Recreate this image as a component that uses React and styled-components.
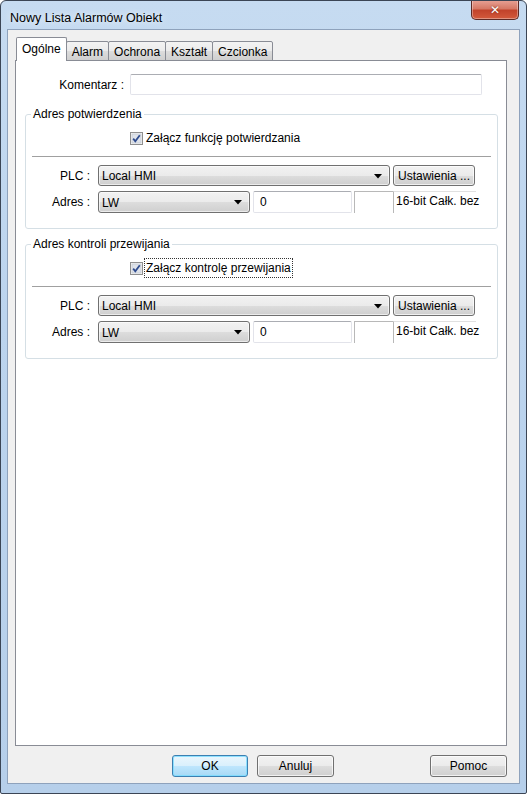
import React from "react";
import styled, { createGlobalStyle } from "styled-components";

const GlobalStyle = createGlobalStyle`
  html, body {
    margin: 0;
    padding: 0;
    background: #ffffff;
  }
  body {
    font-family: "Liberation Sans", Arial, sans-serif;
    font-size: 12px;
    color: #000;
  }
  * {
    box-sizing: border-box;
  }
`;

const tabs = ["Ogólne", "Alarm", "Ochrona", "Kształt", "Czcionka"];

const groups = [
  { title: "Adres potwierdzenia", check: "Załącz funkcję potwierdzania", focused: false },
  { title: "Adres kontroli przewijania", check: "Załącz kontrolę przewijania", focused: true },
];

const CheckIcon = () => (
  <svg width="13" height="13" viewBox="0 0 13 13">
    <rect x="0.5" y="0.5" width="12" height="12" fill="#f4f4f4" stroke="#8f8f8f" />
    <rect x="2" y="2" width="9" height="9" fill="#dfe3ea" stroke="#bcc3cc" strokeWidth="0.6" />
    <path d="M3.2 6.6 L5.3 9.2 L9.8 3.2" fill="none" stroke="#2f4c8f" strokeWidth="1.8" />
  </svg>
);

const Arrow = () => (
  <svg width="8" height="5" viewBox="0 0 8 5">
    <path d="M0 0 H8 L4 4.5 Z" fill="#000" />
  </svg>
);

const App = () => {
  return (
    <>
      <GlobalStyle />
      <Window>
        <TitleBar>
          <Title>Nowy Lista Alarmów Obiekt</Title>
          <CloseButton>✕</CloseButton>
        </TitleBar>
        <Client>
          <TabStrip>
            {tabs.map((t, i) => (
              <Tab key={t} active={i === 0}>
                {t}
              </Tab>
            ))}
          </TabStrip>
          <Panel>
            <CommentRow>
              <CommentLabel>Komentarz :</CommentLabel>
              <CommentInput />
            </CommentRow>
            {groups.map((g) => (
              <Group key={g.title}>
                <Legend>{g.title}</Legend>
                <CheckRow>
                  <CheckIcon />
                  <CheckText focused={g.focused}>{g.check}</CheckText>
                </CheckRow>
                <Separator />
                <FieldRow>
                  <FieldLabel>PLC :</FieldLabel>
                  <Combo width={292}>
                    <span>Local HMI</span>
                    <Arrow />
                  </Combo>
                  <Button width={82}>Ustawienia ...</Button>
                </FieldRow>
                <FieldRow second>
                  <FieldLabel>Adres :</FieldLabel>
                  <Combo width={152}>
                    <span>LW</span>
                    <Arrow />
                  </Combo>
                  <TextBox width={99}>0</TextBox>
                  <HalfBox />
                  <Static>16-bit Całk. bez</Static>
                </FieldRow>
              </Group>
            ))}
          </Panel>
          <Footer>
            <Button width={76} tall primary>OK</Button>
            <Button width={77} tall>Anuluj</Button>
            <Spacer />
            <Button width={77} tall>Pomoc</Button>
          </Footer>
        </Client>
      </Window>
    </>
  );
};

const Window = styled.div`
  width: 527px;
  height: 794px;
  display: flex;
  flex-direction: column;
  border: 1px solid #3b4555;
  border-radius: 6px 6px 2px 2px;
  background: linear-gradient(180deg, #c6dbf1 0%, #bcd4ee 40%, #b6cfea 100%);
  padding: 0 6px 9px 6px;
  overflow: hidden;
`;

const TitleBar = styled.div`
  height: 28px;
  display: flex;
  align-items: flex-start;
  justify-content: space-between;
`;

const Title = styled.div`
  font-size: 12.5px;
  margin-top: 10px;
  margin-left: 3px;
  color: #000;
  text-shadow: 0 0 6px rgba(255, 255, 255, 0.9);
`;

const CloseButton = styled.div`
  width: 48px;
  height: 20px;
  margin-top: -1px;
  margin-right: 1px;
  border: 1px solid #5d2a25;
  border-top: none;
  border-radius: 0 0 5px 5px;
  background: linear-gradient(180deg, #e8a397 0%, #d67966 45%, #c2432b 55%, #d35a3c 100%);
  box-shadow: inset 0 0 0 1px rgba(255, 255, 255, 0.35);
  color: #fff;
  font-family: "DejaVu Sans", sans-serif;
  font-weight: bold;
  font-size: 12px;
  display: flex;
  align-items: center;
  justify-content: center;
  text-shadow: 0 0 2px #6b1d12;
`;

const Client = styled.div`
  flex: 1;
  display: flex;
  flex-direction: column;
  background: #f0f0f0;
  border: 1px solid #8ea2bc;
  padding: 7px 12px 0 7px;
`;

const TabStrip = styled.div`
  display: flex;
  align-items: flex-end;
  height: 24px;
  padding-left: 1px;
  margin-bottom: -1px;
  position: relative;
  z-index: 1;
`;

const Tab = styled.div`
  height: ${(p) => (p.active ? "24px" : "20px")};
  padding: ${(p) => (p.active ? "4px 5px 0" : "3px 5px 0")};
  margin-left: ${(p) => (p.active ? "0" : "-1px")};
  border: 1px solid #898c95;
  border-bottom: ${(p) => (p.active ? "none" : "1px solid #898c95")};
  border-radius: 2px 2px 0 0;
  background: ${(p) =>
    p.active
      ? "#ffffff"
      : "linear-gradient(180deg, #f3f3f3 0%, #ebebeb 50%, #dddddd 51%, #cfcfcf 100%)"};
  white-space: nowrap;
  &:first-child {
    margin-left: 0;
  }
`;

const Panel = styled.div`
  flex: 1;
  background: #ffffff;
  border: 1px solid #898c95;
  padding: 13px 8px 0 9px;
`;

const CommentRow = styled.div`
  display: flex;
  align-items: center;
  height: 21px;
`;

const CommentLabel = styled.div`
  width: 99px;
  text-align: right;
  margin-right: 6px;
`;

const CommentInput = styled.div`
  width: 352px;
  height: 21px;
  border: 1px solid #e2e3ea;
  border-top-color: #abadb3;
  border-radius: 2px;
  background: #fff;
`;

const Group = styled.fieldset`
  width: 473px;
  margin: 12px 0 0 0;
  padding: 0 0 15px 0;
  border: 1px solid #d5dfe5;
  border-radius: 3px;
  & + & {
    margin-top: 8px;
  }
`;

const Legend = styled.legend`
  margin-left: 5px;
  padding: 0 2px;
  line-height: 14px;
`;

const CheckRow = styled.div`
  display: flex;
  align-items: center;
  height: 20px;
  margin-top: 7px;
  padding-left: 104px;
  gap: 2px;
`;

const CheckText = styled.span`
  padding: 2px 1px;
  outline: ${(p) => (p.focused ? "1px dotted #333" : "none")};
`;

const Separator = styled.div`
  margin: 8px 6px 0 6px;
  border-top: 1px solid #a0a0a0;
`;

const FieldRow = styled.div`
  display: flex;
  align-items: stretch;
  margin-top: ${(p) => (p.second ? "5px" : "8px")};
  height: ${(p) => (p.second ? "22px" : "21px")};
`;

const FieldLabel = styled.div`
  width: 64px;
  margin-right: 8px;
  text-align: right;
  display: flex;
  align-items: center;
  justify-content: flex-end;
`;

const Combo = styled.div`
  width: ${(p) => p.width}px;
  margin-right: 3px;
  display: flex;
  align-items: center;
  justify-content: space-between;
  padding: 1px 7px 0 3px;
  border: 1px solid #707070;
  border-radius: 3px;
  background: linear-gradient(180deg, #f2f2f2 0%, #ebebeb 50%, #dddddd 51%, #cfcfcf 100%);
  box-shadow: inset 0 0 0 1px rgba(255, 255, 255, 0.6);
`;

const Button = styled.div`
  width: ${(p) => p.width}px;
  height: ${(p) => (p.tall ? "22px" : "21px")};
  display: flex;
  align-items: center;
  justify-content: center;
  border: 1px solid ${(p) => (p.primary ? "#3c7fb1" : "#707070")};
  border-radius: 3px;
  background: ${(p) =>
    p.primary
      ? "linear-gradient(180deg, #eaf6fd 0%, #d9f0fc 50%, #bee6fd 51%, #a7d9f5 100%)"
      : "linear-gradient(180deg, #f2f2f2 0%, #ebebeb 50%, #dddddd 51%, #cfcfcf 100%)"};
  box-shadow: inset 0 0 0 1px ${(p) => (p.primary ? "rgba(120, 220, 255, 0.8)" : "rgba(255, 255, 255, 0.7)")};
  white-space: nowrap;
`;

const TextBox = styled.div`
  width: ${(p) => p.width}px;
  margin-right: 2px;
  padding: 3px 0 0 6px;
  border: 1px solid #e2e3ea;
  border-top-color: #abadb3;
  border-radius: 2px;
  background: #fff;
`;

const HalfBox = styled.div`
  width: 39px;
  border-left: 1px solid #b8b8b8;
  border-top: 1px solid #b8b8b8;
`;

const Static = styled.div`
  width: 83px;
  padding: 2px 0 0 2px;
  border-left: 1px solid #b8b8b8;
  border-top: 1px solid #e0e0e0;
  white-space: nowrap;
`;

const Footer = styled.div`
  display: flex;
  align-items: flex-start;
  gap: 9px;
  height: 37px;
  padding: 9px 0 0 157px;
`;

const Spacer = styled.div`
  flex: 1;
`;

export default App;
